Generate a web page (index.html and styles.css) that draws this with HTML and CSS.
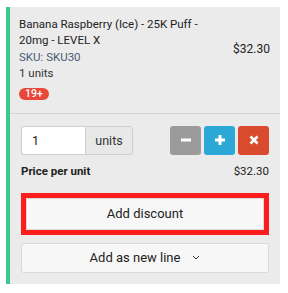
FILE: index.html
```html
<!DOCTYPE html>
<html>
<head>
<meta charset="utf-8">
<link rel="stylesheet" href="styles.css">
</head>
<body>
<div class="page">
  <div class="panel">
    <div class="head">
      <div class="row">
        <div class="info">
          <div class="title">Banana Raspberry (Ice) - 25K Puff - 20mg - LEVEL X</div>
          <div class="sku">SKU: SKU30</div>
          <div class="qty">1 units</div>
        </div>
        <div class="price">$32.30</div>
      </div>
      <div class="tags"><span class="badge">19+</span></div>
    </div>
    <div class="body">
      <div class="controls">
        <div class="group">
          <input class="num" type="text" value="1">
          <span class="addon">units</span>
        </div>
        <div class="btns">
          <button class="ib grey" aria-label="minus"><svg width="12" height="12" viewBox="0 0 12 12"><rect x="1" y="4.5" width="10" height="3" fill="#fff"/></svg></button>
          <button class="ib blue" aria-label="plus"><svg width="12" height="12" viewBox="0 0 12 12"><rect x="1" y="4.5" width="10" height="3" fill="#fff"/><rect x="4.5" y="1" width="3" height="10" fill="#fff"/></svg></button>
          <button class="ib red" aria-label="remove"><svg width="10" height="10" viewBox="0 0 10 10"><path d="M1.5 1.5 L8.5 8.5 M8.5 1.5 L1.5 8.5" stroke="#fff" stroke-width="2.6"/></svg></button>
        </div>
      </div>
      <div class="ppu">
        <span class="lbl">Price per unit</span>
        <span>$32.30</span>
      </div>
      <div class="hl">
        <button class="btn disc">Add discount</button>
      </div>
      <button class="btn newline">Add as new line <svg class="chev" width="8" height="5" viewBox="0 0 8 5"><path d="M1 1 L4 4 L7 1" fill="none" stroke="#333" stroke-width="1"/></svg></button>
    </div>
  </div>
</div>
</body>
</html>
```

FILE: styles.css
```css
html, body {
  margin: 0;
  padding: 0;
  background: #fff;
}
body {
  font-family: Roboto, "Liberation Sans", Arial, sans-serif;
  color: #222;
}
.page {
  padding: 7px 8px 9px 6px;
}
.panel {
  background: #ebebeb;
  border-left: 4px solid #3dc98d;
  height: 277px;
  box-sizing: border-box;
}
.head {
  padding: 9px 10px 13px 9px;
  border-bottom: 1px solid #d5d5d5;
}
.row {
  display: flex;
  align-items: center;
}
.info {
  flex: 1;
  font-size: 11.5px;
  line-height: 16.4px;
}
.sku {
  color: #4c5b73;
}
.qty {
  color: #333;
}
.price {
  font-size: 12px;
  padding-left: 16px;
  flex: none;
}
.tags {
  display: flex;
  margin-top: 6px;
}
.badge {
  display: block;
  height: 12px;
  line-height: 12px;
  padding: 0 6px;
  border-radius: 6px;
  background: #e8473a;
  color: #fff;
  font-size: 10.5px;
  font-weight: 500;
}
.body {
  padding: 12px 11px 12px 11px;
}
.controls {
  display: flex;
  justify-content: space-between;
  align-items: center;
}
.group {
  display: flex;
  height: 29px;
  width: 112px;
}
.num {
  box-sizing: border-box;
  width: 64px;
  height: 29px;
  border: 1px solid #cfcfcf;
  border-right: none;
  border-radius: 3px 0 0 3px;
  background: #fff;
  font-family: inherit;
  font-size: 12.5px;
  color: #222;
  padding: 0 10px;
  margin: 0;
  outline: none;
}
.addon {
  box-sizing: border-box;
  width: 48px;
  height: 29px;
  border: 1px solid #cfcfcf;
  border-radius: 0 3px 3px 0;
  background: #e8e8e8;
  font-size: 12.5px;
  color: #333;
  display: flex;
  align-items: center;
  justify-content: center;
}
.btns {
  display: flex;
  gap: 3px;
}
.ib {
  width: 31px;
  height: 29px;
  border: none;
  border-radius: 3px;
  padding: 0;
  margin: 0;
  display: flex;
  align-items: center;
  justify-content: center;
}
.grey { background: #9b9b9b; }
.blue { background: #2ca8d6; }
.red { background: #da4a2d; }
.ppu {
  display: flex;
  justify-content: space-between;
  font-size: 11.5px;
  line-height: 16px;
  margin-top: 8px;
}
.lbl {
  font-weight: 700;
}
.hl {
  margin-top: 14px;
  border: 5px solid #fd1d1d;
  width: 248px;
  box-sizing: border-box;
}
.btn {
  display: flex;
  align-items: center;
  justify-content: center;
  gap: 10px;
  box-sizing: border-box;
  width: 100%;
  background: #f7f7f7;
  border: 1px solid #d9d9d9;
  border-radius: 3px;
  font-family: inherit;
  font-size: 13px;
  color: #222;
  margin: 0;
  padding: 0;
}
.disc {
  height: 32px;
  border-radius: 0;
}
.newline {
  margin-top: 8px;
  height: 30px;
}
.chev {
  margin-left: 2px;
}
```
